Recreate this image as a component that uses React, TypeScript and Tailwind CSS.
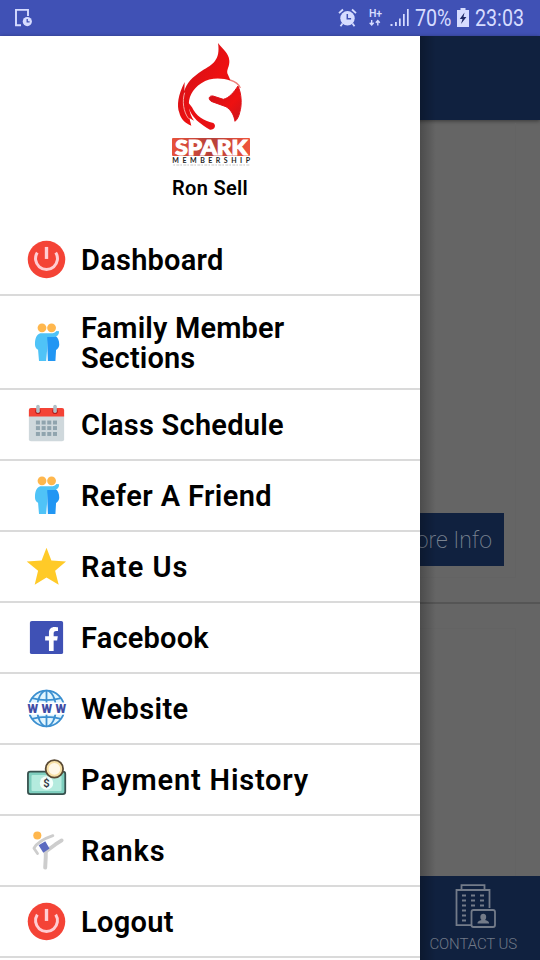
import type { ReactNode } from "react";
import { FaFacebookF } from "react-icons/fa";

interface MenuItem {
  label: string;
  icon: ReactNode;
  tracking: string;
  tall?: boolean;
}

function PowerIcon() {
  return (
    <svg viewBox="0 0 48 48" className="h-[45px] w-[45px]" fill="none">
      <circle cx="24" cy="24" r="20" fill="#f44336" />
      <path d="M14.2 16.6A11.7 11.7 0 1 0 33.8 16.6" stroke="#ffcdd2" strokeWidth="3.2" />
      <path d="M24 10.6V23.4" stroke="#ffcdd2" strokeWidth="3.6" />
    </svg>
  );
}

function PeopleIcon() {
  return (
    <svg viewBox="0 0 48 48" className="h-[45px] w-[45px]">
      <circle cx="19.2" cy="8.3" r="4.7" fill="#ffb74d" />
      <circle cx="29.4" cy="8.3" r="4.7" fill="#ffb74d" />
      <path d="M24.4 17h9.1c2.6 1.2 4.1 4.7 4.1 9.5 0 2.4-1.5 4.4-3.4 5.5l-.7 11.6h-8z" fill="#2196f3" />
      <path d="M17.5 14.2h11.2c3 0 4.5-.8 6-2.6l2.7.4c.2 3.4-1.6 5.2-4.6 6H24.8V30l-1.2 13.6H16l-1-11.8c-1.9-1-3.3-3-3.3-5.8 0-6.6 2-10.8 5.8-11.8z" fill="#4fc3f7" />
    </svg>
  );
}

function CalendarIcon() {
  const cols = [12.7, 18.8, 24.8, 30.9];
  const rows = [19.8, 25.7, 32];
  return (
    <svg viewBox="0 0 48 48" className="h-[45px] w-[45px]">
      <path d="M5.2 14h37.6v25.6a2.2 2.2 0 0 1-2.2 2.2H7.4a2.2 2.2 0 0 1-2.2-2.2z" fill="#cfd8dc" />
      <path d="M5.2 15.5v-7a2.2 2.2 0 0 1 2.2-2.2h33.2a2.2 2.2 0 0 1 2.2 2.2v7z" fill="#f44336" />
      <circle cx="14.9" cy="9.8" r="3" fill="#b71c1c" />
      <circle cx="33.1" cy="9.8" r="3" fill="#b71c1c" />
      <rect x="13" y="2.8" width="3.8" height="9" rx="1.9" fill="#b0bec5" />
      <rect x="31.2" y="2.8" width="3.8" height="9" rx="1.9" fill="#b0bec5" />
      {rows.map((y) => cols.map((x) => <rect key={`${x}-${y}`} x={x} y={y} width="4.3" height="4.2" fill="#90a4ae" />))}
    </svg>
  );
}

function StarIcon() {
  return (
    <svg viewBox="0 0 48 48" className="h-[45px] w-[45px]">
      <path d="M24 3.9 29.2 17.6 44.8 18.6 33.2 28.6 37 43.5 24 35.8 11.4 43.5 15 28.6 2.9 18.6 18.8 17.6z" fill="#ffca28" />
    </svg>
  );
}

function FacebookIcon() {
  return (
    <svg viewBox="0 0 48 48" className="h-[45px] w-[45px]">
      <rect x="6.3" y="6.3" width="35.4" height="35.4" rx="2" fill="#3f51b5" />
      <FaFacebookF x="16.6" y="12.8" size="25.6" color="#fff" />
    </svg>
  );
}

function WebsiteIcon() {
  return (
    <svg viewBox="0 0 48 48" className="h-[45px] w-[45px]">
      <g fill="#e1f5fe" stroke="#3b8fd0" strokeWidth="1.9">
        <circle cx="24" cy="24" r="19" />
        <ellipse cx="24" cy="24" rx="10" ry="19" />
        <path d="M24 5v38M8.5 13q15.5 4 31 0M8.5 35q15.5-4 31 0" fill="none" />
      </g>
      <rect x="2" y="17.6" width="44" height="13" fill="#fff" />
      <text x="3.8" y="28.6" textLength="41" fill="#3f4da5" fontFamily="Roboto, sans-serif" fontWeight="900" fontSize="13">
        WWW
      </text>
    </svg>
  );
}

function PaymentIcon() {
  return (
    <svg viewBox="0 0 48 48" className="h-[45px] w-[45px]">
      <rect x="4.2" y="15.5" width="39.8" height="24" rx="2.5" fill="#7fcfbf" stroke="#37514e" strokeWidth="1.9" />
      <rect x="8" y="19.2" width="32" height="17" rx="1" fill="#b4ebde" />
      <circle cx="24" cy="27.8" r="7.2" fill="#f3fffb" />
      <text x="24" y="32" textAnchor="middle" fill="#333b45" fontFamily="Roboto, sans-serif" fontWeight="600" fontSize="12">
        $
      </text>
      <circle cx="32.4" cy="12.7" r="9.3" fill="#f7e0a6" stroke="#5a4a34" strokeWidth="1.9" />
      <circle cx="32.4" cy="12.7" r="6.2" fill="#fff8e8" />
    </svg>
  );
}

function RanksIcon() {
  return (
    <svg viewBox="0 0 48 48" className="h-[45px] w-[45px]" fill="none" stroke="#cdcdcd" strokeLinecap="round" strokeLinejoin="round">
      <circle cx="14.2" cy="8" r="4.3" fill="#ffb74d" stroke="none" />
      <path d="M30.8 8.2C24 10.5 14 15.5 10.6 21.6L14.4 27.2" strokeWidth="3" />
      <path d="M23.2 25.5V31L22.6 42.2" strokeWidth="4.2" />
      <path d="M24 24.6 33.5 17.5 40.2 13.2" strokeWidth="4" />
      <path d="M15.6 18.4 22.7 14.2 27.2 21.8 20.6 26.4z" fill="#5c6bc0" stroke="none" />
    </svg>
  );
}

function SparkLogo() {
  return (
    <svg viewBox="0 0 360 399" className="h-[133px] w-[120px]">
      <defs>
        <linearGradient id="banner" x1="0" x2="1" y1="0" y2="0">
          <stop offset="0" stopColor="#e8523c" />
          <stop offset="0.5" stopColor="#b5403a" />
          <stop offset="1" stopColor="#f0543c" />
        </linearGradient>
        <linearGradient id="flame" x1="0" x2="1" y1="0" y2="1">
          <stop offset="0" stopColor="#c8101a" />
          <stop offset="0.6" stopColor="#ee1111" />
          <stop offset="1" stopColor="#c9141c" />
        </linearGradient>
      </defs>
      <path d="M204 21C218 40 236 50 238 74 239 92 230 98 232 112L242 134C214 125 180 124 154 142 126 160 114 186 117 212 119 230 124 242 132 254L118 246 124 269C106 262 92 248 88 230 80 210 84 176 104 138L103 166C108 142 128 122 156 104 188 86 212 72 204 21Z" fill="url(#flame)" />
      <path d="M104 170C96 195 100 228 116 248" fill="none" stroke="#f7a5a1" strokeWidth="3" />
      <path d="M264 150C274 172 277 204 269 230 266 242 262 250 255 256 252 238 244 222 228 212L186 197C173 191 176 178 189 180L220 190C238 186 252 168 264 150Z" fill="url(#flame)" stroke="#e01219" strokeWidth="3" strokeLinejoin="round" />
      <path d="M112 196C116 222 124 250 180 281 194 282 200 268 190 261 160 254 138 240 126 214Z" fill="#e81014" />
      <path d="M240 132C254 136 266 144 271 156" fill="none" stroke="#ee7f7a" strokeWidth="4" />
      <rect x="66" y="306" width="234" height="54" rx="3" fill="url(#banner)" />
      <text x="76" y="358" textLength="216" lengthAdjust="spacingAndGlyphs" fill="#fff" stroke="#fff" strokeWidth="3.5" fontFamily="Lato, sans-serif" fontWeight="900" fontSize="63">
        SPARK
      </text>
      <text x="67" y="380" textLength="233" fill="#222" fontFamily="Lato, sans-serif" fontWeight="700" fontSize="21">
        MEMBERSHIP
      </text>
      <path d="M70 387H298" stroke="#aaa" strokeWidth="2" strokeDasharray="5 4 9 3" />
    </svg>
  );
}

function ContactIcon() {
  return (
    <svg viewBox="0 0 42 46" className="h-[46px] w-[42px]" fill="none" stroke="#737b89" strokeWidth="1.8">
      <path d="M17 42.2H2.5V7H35.5V25M7.5 7V2.2H30.5V7" />
      <path d="M8 12.5h4M17 12.5h4M26 12.5h4M8 17.5h4M17 17.5h4M26 17.5h4M8 22.5h4M17 22.5h4M26 22.5h4M8 27.5h4M8 32.5h4M8 37.5h4" />
      <rect x="17.5" y="27" width="23.5" height="17" rx="2" />
      <path d="M23.5 40.5c0-2.5 2-2.6 4-3.5-1.6-1.4-1.8-6.2 1.8-6.2s3.4 4.8 1.8 6.2c2 .9 4 1 4 3.5z" fill="#737b89" stroke="none" />
    </svg>
  );
}

function StatusBar() {
  return (
    <div className="flex h-9 items-center bg-[#4051b5] pl-3.5 text-[#d6dcff]">
      <svg viewBox="0 0 20 20" className="h-5 w-5" fill="none" stroke="currentColor">
        <path d="M7 17.2H2V1.9H14V8" strokeWidth="1.9" />
        <circle cx="13.3" cy="13.6" r="4.6" fill="currentColor" stroke="none" />
        <path d="M13.2 11v2.9h2.4" stroke="#4051b5" strokeWidth="1.3" />
      </svg>
      <svg viewBox="0 0 20 20" className="ml-[304px] h-5 w-5 shrink-0" fill="none" stroke="currentColor">
        <circle cx="9.5" cy="10.3" r="7.2" fill="currentColor" stroke="none" />
        <path d="M1 5.2 5 1.5M18 5.2 14 1.5M4.5 15.5 2.5 18.2M14.5 15.5l2 2.7" strokeWidth="1.8" />
        <path d="M9.3 6v4.8h3.8" stroke="#4051b5" strokeWidth="1.5" />
      </svg>
      <svg viewBox="0 0 16 20" className="ml-2.5 h-5 w-4 shrink-0" fill="none" stroke="currentColor">
        <text x="1" y="8.5" fill="currentColor" stroke="none" fontFamily="Roboto, sans-serif" fontWeight="600" fontSize="10.5" textLength="13">
          H+
        </text>
        <path d="M3.7 12v5M1.7 14.8l2 2.2 2-2.2M9.8 17.5v-5M7.8 14.7l2-2.2 2 2.2" strokeWidth="1.4" />
      </svg>
      <svg viewBox="0 0 19 20" className="ml-1.5 h-5 w-[19px] shrink-0" fill="currentColor">
        <path d="M.5 16h2v2h-2zM5 14h1.8v4H5zM9 10.5h1.7V18H9zM13 6h1.7v12H13zM17 1h1.7v17H17z" />
      </svg>
      <span className="ml-1.5 w-12 shrink-0">
        <span className="inline-block origin-left scale-x-[.82] font-[Roboto,sans-serif] text-2xl leading-9">70%</span>
      </span>
      <svg viewBox="0 0 12 19" className="-ml-[6px] -mt-0.5 h-[19px] w-3 shrink-0" fill="currentColor">
        <path d="M3.5 0h5v2H12v17H0V2h3.5z" />
        <path d="M7.5 4.5 2.8 11h2.7L4 16l5.4-7H6.5z" fill="#202a66" />
      </svg>
      <span className="ml-1.5 shrink-0">
        <span className="inline-block origin-left scale-x-[.82] font-[Roboto,sans-serif] text-2xl leading-9">23:03</span>
      </span>
    </div>
  );
}

// Dimmed home screen that stays visible next to the open drawer
function HomeScreen() {
  return (
    <div className="flex flex-1 flex-col bg-[#656565]">
      <div className="h-[84px] shrink-0 bg-[#10213f] shadow-[0_1px_4px_rgba(0,0,0,.45)]" />
      <div className="mr-6 mt-[3px] flex h-[455px] shrink-0 items-end justify-end border-b border-r border-[#636363] pb-[11px] pr-[11px]">
        <div className="flex h-[53px] w-[108px] items-center justify-end bg-[#10213f] pr-3">
          <span className="whitespace-nowrap pt-1 font-[Roboto,sans-serif] text-[23px] font-extralight text-[#7a8391]">More Info</span>
        </div>
      </div>
      <div className="mt-6 h-0.5 shrink-0 bg-[#555555]" />
      <div className="mr-6 mt-6 flex-1 border-r border-t border-[#636363]" />
      <div className="flex h-[84px] shrink-0 flex-col items-end bg-[#10213f] pt-[7px]">
        <div className="mr-[23px] flex flex-col items-center">
          <div className="pl-[3px]">
            <ContactIcon />
          </div>
          <span className="mt-1.5 whitespace-nowrap font-[Roboto,sans-serif] text-[15px] font-light leading-[18px] tracking-[-0.1px] text-[#707987]">CONTACT US</span>
        </div>
      </div>
    </div>
  );
}

const menuItems: MenuItem[] = [
  { label: "Dashboard", icon: <PowerIcon />, tracking: "tracking-[0.25px]" },
  { label: "Family Member Sections", icon: <PeopleIcon />, tracking: "tracking-[0.15px]", tall: true },
  { label: "Class Schedule", icon: <CalendarIcon />, tracking: "tracking-[0.25px]" },
  { label: "Refer A Friend", icon: <PeopleIcon />, tracking: "tracking-[0.4px]" },
  { label: "Rate Us", icon: <StarIcon />, tracking: "tracking-[1px]" },
  { label: "Facebook", icon: <FacebookIcon />, tracking: "tracking-[0.2px]" },
  { label: "Website", icon: <WebsiteIcon />, tracking: "tracking-[0.4px]" },
  { label: "Payment History", icon: <PaymentIcon />, tracking: "tracking-[0.8px]" },
  { label: "Ranks", icon: <RanksIcon />, tracking: "tracking-[0.8px]" },
  { label: "Logout", icon: <PowerIcon />, tracking: "tracking-[0.3px]" },
];

function MenuRow({ item }: { item: MenuItem }) {
  return (
    <li className={`flex shrink-0 items-center gap-3 border-b-2 border-[#dadada] pl-6 ${item.tall ? "h-[94px]" : "h-[71px]"}`}>
      <span className="shrink-0">{item.icon}</span>
      <span className={`w-60 text-[29px] font-semibold leading-[30px] ${item.tall ? "pt-0.5" : ""} ${item.tracking}`}>{item.label}</span>
    </li>
  );
}

function Drawer() {
  return (
    <aside className="absolute bottom-0 left-0 top-9 flex w-[420px] flex-col overflow-hidden bg-white font-[Roboto,sans-serif] text-black">
      <header className="flex h-[189px] shrink-0 flex-col items-center">
        <SparkLogo />
        <h1 className="mt-[7px] text-xl font-semibold leading-6 tracking-[0.3px]">Ron Sell</h1>
      </header>
      <ul className="flex flex-col">
        {menuItems.map((item) => (
          <MenuRow key={item.label} item={item} />
        ))}
      </ul>
    </aside>
  );
}

export default function App() {
  return (
    <div className="relative flex h-[960px] w-[540px] flex-col overflow-hidden">
      <StatusBar />
      <HomeScreen />
      <div className="absolute bottom-0 left-[420px] top-9 w-4 bg-linear-to-r from-black/25 to-transparent" />
      <Drawer />
    </div>
  );
}
